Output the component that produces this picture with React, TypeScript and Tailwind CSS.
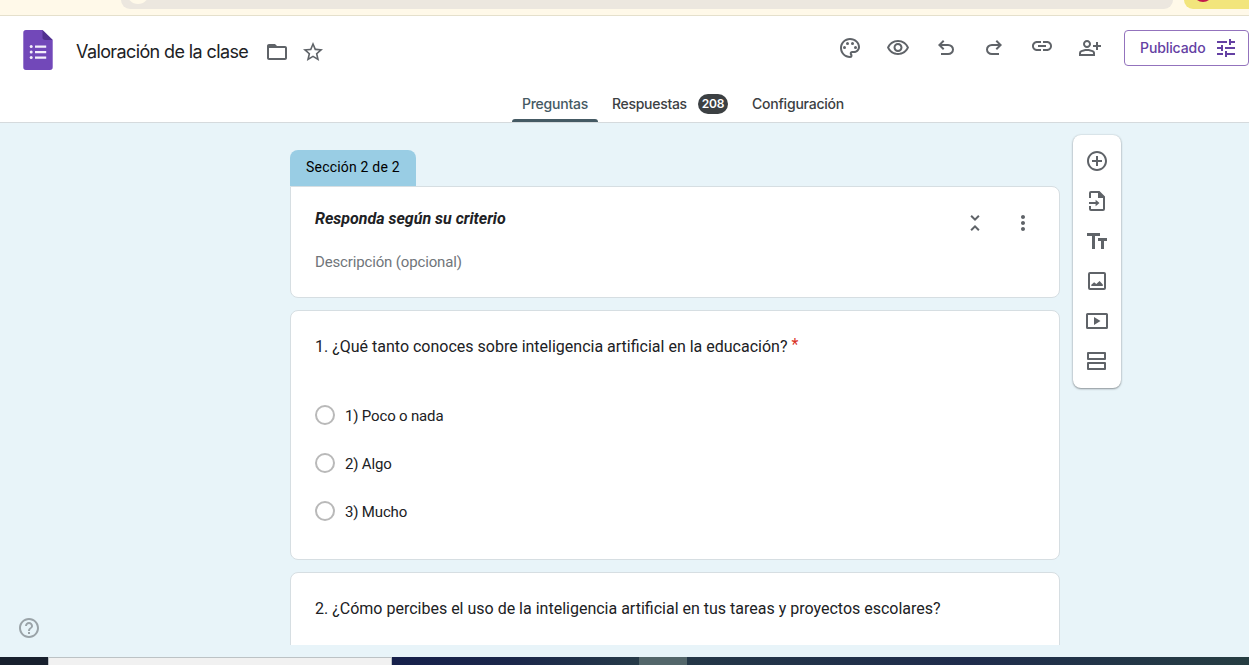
import type { ReactNode } from "react";
import {
  MdAddCircleOutline,
  MdFolderOpen,
  MdHelpOutline,
  MdLink,
  MdMoreVert,
  MdOutlinePalette,
  MdOutlinePersonAddAlt,
  MdOutlineVisibility,
  MdStarBorder,
  MdTune,
  MdUnfoldLess,
} from "react-icons/md";

function Icon({ children }: { children: ReactNode }) {
  return (
    <svg viewBox="0 0 24 24" className="size-6 fill-current">
      {children}
    </svg>
  );
}

const undoPath =
  "M7 19v-2h7.1q1.575 0 2.738-1T18 13.5 16.838 11 14.1 10H7.8l2.6 2.6L9 14 4 9l5-5 1.4 1.4L7.8 8h6.3q2.425 0 4.163 1.575T20 13.5t-1.737 3.925T14.1 19H7z";

function FormsLogo() {
  return (
    <svg viewBox="0 0 30 40" className="h-10 w-[30px]">
      <path d="M3 0H19.500L29.700 10V37.300A2.700 2.700 0 0 1 27 40H3A2.700 2.700 0 0 1 .3 37.300V2.700A2.700 2.700 0 0 1 3 0Z" fill="#7248b9" />
      <path d="M19.5 0L29.7 10H22.2A2.7 2.7 0 0 1 19.5 7.3Z" fill="#51308f" />
      <g fill="#f4effb">
        <circle cx="8.2" cy="16.6" r="1.5" />
        <circle cx="8.2" cy="22.1" r="1.5" />
        <circle cx="8.2" cy="27.6" r="1.5" />
        <path d="M12 15.5h11.2v2.2H12zM12 21h11.2v2.2H12zM12 26.5h11.2v2.2H12z" />
      </g>
    </svg>
  );
}

function BrowserBar() {
  return (
    <div className="flex h-4 items-start border-b border-[#e5e0cc] bg-[#fff9e9] pl-[121px]">
      <div className="h-[9px] w-[1052px] overflow-hidden rounded-b-[14px] bg-[#ece7df] pl-[6px]">
        <div className="-mt-[18px] size-[22px] rounded-full bg-[#fff9e9]" />
      </div>
      <div className="ml-[11px] h-[9px] flex-1 overflow-hidden rounded-bl-[14px] bg-[#f2e57c] pl-[9px]">
        <div className="-mt-[18px] size-5 rounded-full bg-[#c2184b]" />
      </div>
    </div>
  );
}

function Tool({ children }: { children: ReactNode }) {
  return <button className="flex size-12 items-center justify-center">{children}</button>;
}

function Header() {
  return (
    <header className="flex h-[107px] flex-col border-b border-[#d5dadd] bg-white font-['Inter',sans-serif]">
      <div className="flex h-[70px] items-start">
        <div className="flex h-[68px] items-center pl-[23px]">
          <FormsLogo />
        </div>
        <div className="flex h-[72px] items-center">
          <h1 className="ml-[23px] w-[172px] whitespace-nowrap pb-0.5 text-[18px] tracking-[-0.61px] text-[#202124]">
            Valoración de la clase
          </h1>
          <MdFolderOpen className="ml-[17px] size-6 text-[#5f6368]" />
          <MdStarBorder className="ml-3 size-6 text-[#5f6368]" />
        </div>
        <div className="ml-auto flex h-16 items-center text-[#5f6368]">
          <Tool><MdOutlinePalette className="size-6" /></Tool>
          <Tool><MdOutlineVisibility className="size-6" /></Tool>
          <Tool><Icon><path d={undoPath} /></Icon></Tool>
          <Tool><Icon><path d={undoPath} transform="translate(24 0) scale(-1 1)" /></Icon></Tool>
          <Tool><MdLink className="mb-1 size-6" /></Tool>
          <Tool><MdOutlinePersonAddAlt className="size-6" /></Tool>
          <button className="ml-[10px] flex h-9 w-[125px] items-center rounded border border-[#9373bd] pl-[15px] text-[#6440a3]">
            <span className="w-[74px] whitespace-nowrap pb-px text-left text-[14px] font-medium tracking-[-0.1px]">Publicado</span>
            <MdTune className="size-6" />
          </button>
        </div>
      </div>
      <nav className="flex h-9 pl-[512px] text-[14px] font-medium tracking-[-0.22px] text-[#3c4043]">
        <div className="flex w-[86px] flex-col items-center text-[#455a64]">
          <span className="flex h-[33px] items-center pt-px">Preguntas</span>
          <span className="h-[3px] w-full rounded-t-[3px] bg-[#455a64]" />
        </div>
        <div className="ml-[14px] flex h-9 items-center">
          <span className="w-[86px] whitespace-nowrap pb-0.5 tracking-[-0.3px]">Respuestas</span>
          <span className="flex h-5 w-[30px] items-center justify-center rounded-full bg-[#3c4043] text-[12px] font-semibold text-white">
            208
          </span>
        </div>
        <span className="ml-6 flex h-9 items-center pb-0.5">Configuración</span>
      </nav>
    </header>
  );
}

function SideTools() {
  return (
    <aside className="ml-[13px] mt-3 flex h-[253px] w-12 flex-col items-center rounded-lg bg-white pt-[6px] text-[#5f6368] shadow-[0_1px_2px_rgba(60,64,67,0.5),0_0_2px_rgba(60,64,67,0.2)]">
      <span className="flex h-10 items-center"><MdAddCircleOutline className="size-6" /></span>
      <span className="flex h-10 items-center">
        <Icon>
          <path d="M4 9V4a2 2 0 0 1 2-2h8.500L20 7.500V20a2 2 0 0 1-2 2H6a2 2 0 0 1-2-2v-3h2v3h12V9h-5V4H6v5Z" />
          <path d="M4 13h6.600v-2.200L14.500 14l-3.900 3.200V15H4Z" />
        </Icon>
      </span>
      <span className="flex h-10 items-center">
        <Icon><path d="M2 4h13v3h-5v13H7V7H2ZM13 9h9v3h-3v8h-3v-8h-3Z" /></Icon>
      </span>
      <span className="flex h-10 items-center">
        <Icon>
          <path d="M5 3h14a2 2 0 0 1 2 2v14a2 2 0 0 1-2 2H5a2 2 0 0 1-2-2V5a2 2 0 0 1 2-2Zm0 2v14h14V5ZM6.300 17v-1.200l2.800-2.500 2.200 1.800 3.300-3.100 3.200 3.600V17Z" />
        </Icon>
      </span>
      <span className="flex h-10 items-center">
        <Icon>
          <path d="M2.500 4h19A1.500 1.500 0 0 1 23 5.500v13a1.500 1.500 0 0 1-1.500 1.500h-19A1.500 1.500 0 0 1 1 18.500v-13A1.500 1.500 0 0 1 2.500 4ZM3 6v12h18V6ZM9 8v8l6.500-4Z" />
        </Icon>
      </span>
      <span className="flex h-10 items-center">
        <Icon>
          <path d="M3 3h17a1 1 0 0 1 1 1v6a1 1 0 0 1-1 1H3a1 1 0 0 1-1-1V4a1 1 0 0 1 1-1Zm1 2v4h15V5ZM3 13h17a1 1 0 0 1 1 1v6a1 1 0 0 1-1 1H3a1 1 0 0 1-1-1v-6a1 1 0 0 1 1-1Zm1 2v4h15v-4Z" />
        </Icon>
      </span>
    </aside>
  );
}

const options = ["1) Poco o nada", "2) Algo", "3) Mucho"];

export default function App() {
  return (
    <div className="flex h-[665px] w-[1249px] flex-col overflow-hidden bg-[#e8f4f9] font-['Roboto',sans-serif] text-[#202124]">
      <BrowserBar />
      <Header />
      <main className="flex h-[522px] overflow-hidden">
        <div className="flex w-[290px] flex-col justify-end pb-[5px] pl-[17px]">
          <MdHelpOutline className="size-6 text-[#9aa3a8]" />
        </div>
        <div className="w-[770px] pt-[27px]">
          <div className="flex h-9 w-[126px] items-center rounded-t-lg bg-[#99cde4] pb-0.5 pl-4 text-[14px] tracking-[0.2px] text-black">
            Sección 2 de 2
          </div>
          <section className="flex h-28 justify-between rounded-b-lg rounded-tr-lg border border-[#d6dee2] bg-white pl-6 pr-6">
            <div>
              <h2 className="mt-5 text-[16px] font-bold italic leading-6">Responda según su criterio</h2>
              <p className="mt-[19px] text-[15px] leading-6 tracking-[-0.15px] text-[#70757a]">Descripción (opcional)</p>
            </div>
            <div className="mt-6 flex gap-6 text-[#5f6368]">
              <MdUnfoldLess className="size-6" />
              <MdMoreVert className="size-6" />
            </div>
          </section>
          <section className="mt-3 h-[250px] rounded-lg border border-[#d6dee2] bg-white px-6 pt-6">
            <h3 className="flex gap-1 text-[16px] leading-6">
              <span>1. ¿Qué tanto conoces sobre inteligencia artificial en la educación?</span>
              <span className="-mt-0.5 text-[#d93025]">*</span>
            </h3>
            <div className="mt-8">
              {options.map((label) => (
                <div key={label} className="flex h-12 items-center">
                  <span className="size-5 rounded-full border-2 border-[#b9b9b9]" />
                  <span className="ml-[10px] pt-0.5 text-[15px] tracking-[-0.17px]">{label}</span>
                </div>
              ))}
            </div>
          </section>
          <section className="mt-3 h-[250px] rounded-lg border border-[#d6dee2] bg-white px-6 pt-6">
            <h3 className="whitespace-nowrap text-[16px] leading-6">
              2. ¿Cómo percibes el uso de la inteligencia artificial en tus tareas y proyectos escolares?
            </h3>
          </section>
        </div>
        <SideTools />
      </main>
      <footer className="mt-3 flex h-2">
        <div className="w-12 bg-[#18202e]" />
        <div className="w-[344px] border border-b-0 border-[#bcc2c5] bg-[#f1f1f1]" />
        <div className="w-[247px] bg-linear-to-r from-[#16204b] via-[#1b274a] to-[#263a48]" />
        <div className="w-12 bg-[#53666a]" />
        <div className="flex-1 bg-linear-to-r from-[#243747] via-[#1f2c4c] to-[#263d42]" />
      </footer>
    </div>
  );
}
